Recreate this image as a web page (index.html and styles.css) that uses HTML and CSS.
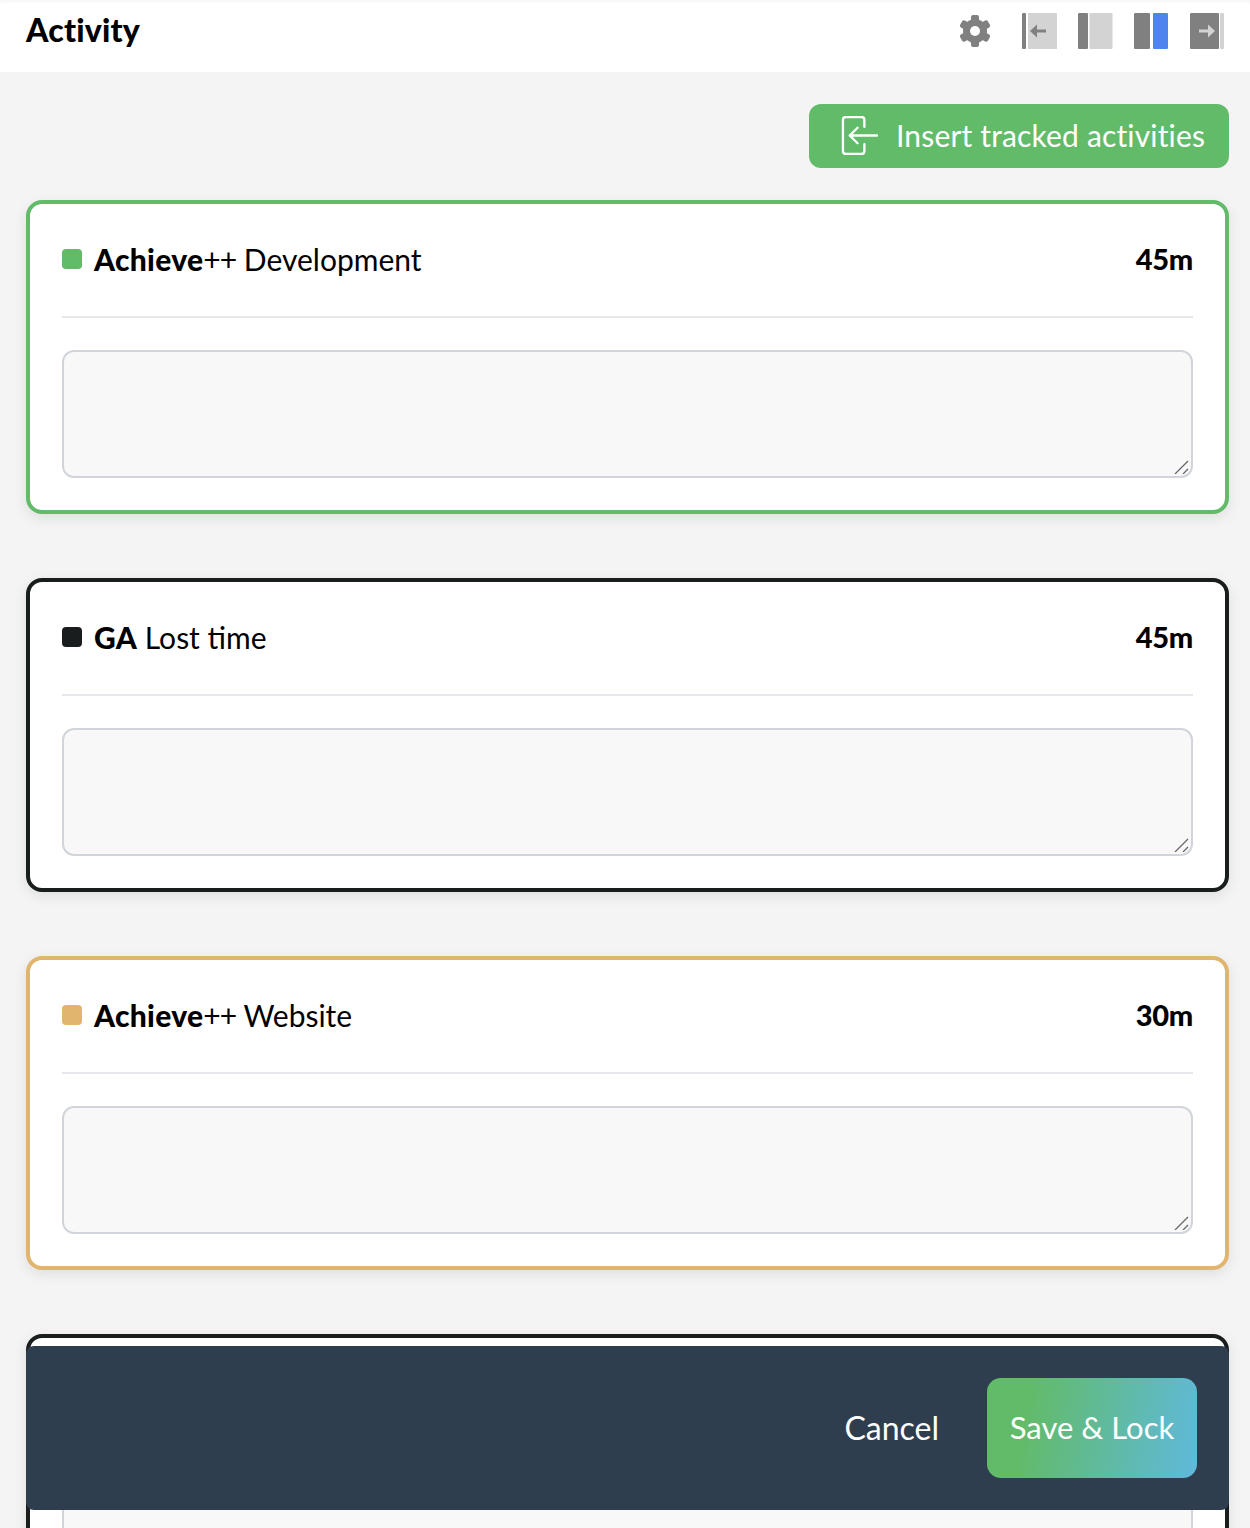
FILE: index.html
```html
<!DOCTYPE html>
<html lang="en">
    <head>
        <meta charset="utf-8">
        <meta name="viewport" content="width=device-width, initial-scale=1">
        <title>Activity</title>
        <link rel="stylesheet" href="styles.css">
    </head>
    <body>
        <svg class="defs">
            <symbol id="grip" viewBox="0 0 15 14">
                <path d="M1 14L14 1M9 14l5-5" fill="none" stroke="#666" stroke-width="1.3"/>
            </symbol>
        </svg>

        <header class="topbar">
            <h1>Activity</h1>
            <div class="tools">
                <svg class="gear" viewBox="0 0 32 32">
                    <g fill="#808080">
                        <rect x="12" y="0" width="8" height="32" rx="2"/>
                        <rect x="12" y="0" width="8" height="32" rx="2" transform="rotate(60 16 16)"/>
                        <rect x="12" y="0" width="8" height="32" rx="2" transform="rotate(120 16 16)"/>
                        <circle cx="16" cy="16" r="12"/>
                    </g>
                    <circle cx="16" cy="16" r="5" fill="#fff"/>
                </svg>
                <div class="panes">
                    <svg viewBox="0 0 36 36">
                        <rect x="0" y="0" width="4" height="36" rx="1" fill="#808080"/>
                        <rect x="6" y="0" width="29" height="36" fill="#d3d3d3"/>
                        <path d="M12 18h12" stroke="#808080" stroke-width="3"/>
                        <path d="M8 18l7-6.500v13z" fill="#808080"/>
                    </svg>
                    <svg viewBox="0 0 36 36">
                        <rect x="0" y="0" width="10" height="36" rx="1" fill="#808080"/>
                        <rect x="11.500" y="0" width="23" height="36" rx="1" fill="#d3d3d3"/>
                    </svg>
                    <svg viewBox="0 0 36 36">
                        <rect x="0" y="0" width="16" height="36" rx="1" fill="#808080"/>
                        <rect x="19" y="0" width="15" height="36" rx="1" fill="#4f84ee"/>
                    </svg>
                    <svg viewBox="0 0 36 36">
                        <rect x="0" y="0" width="29" height="36" rx="1" fill="#808080"/>
                        <rect x="30" y="0" width="4" height="36" rx="1" fill="#d3d3d3"/>
                        <path d="M9 18h12" stroke="#d3d3d3" stroke-width="3"/>
                        <path d="M25 18l-7-6.500v13z" fill="#d3d3d3"/>
                    </svg>
                </div>
            </div>
        </header>

        <main class="content">
            <div class="actions">
                <button class="insert-btn">
                    <svg viewBox="0 0 38 40" fill="none" stroke="#fff" stroke-width="2.400" stroke-linecap="round" stroke-linejoin="round">
                        <path d="M24 11V4a3 3 0 0 0-3-3H5a3 3 0 0 0-3 3v32a3 3 0 0 0 3 3h16a3 3 0 0 0 3-3v-7"/>
                        <path d="M37 20H9M17 12l-8 8 8 8"/>
                    </svg>
                    Insert tracked activities
                </button>
            </div>

            <section class="card green">
                <div class="card-head">
                    <span class="dot"></span>
                    <span class="name"><b>Achieve</b><span class="plus">++</span> Development</span>
                    <b class="time">45m</b>
                </div>
                <div class="note">
                    <textarea></textarea>
                    <svg class="grip"><use href="#grip"></use></svg>
                </div>
            </section>

            <section class="card black">
                <div class="card-head">
                    <span class="dot"></span>
                    <span class="name"><b>GA</b> Lost time</span>
                    <b class="time">45m</b>
                </div>
                <div class="note">
                    <textarea></textarea>
                    <svg class="grip"><use href="#grip"></use></svg>
                </div>
            </section>

            <section class="card tan">
                <div class="card-head">
                    <span class="dot"></span>
                    <span class="name"><b>Achieve</b><span class="plus">++</span> Website</span>
                    <b class="time">30m</b>
                </div>
                <div class="note">
                    <textarea></textarea>
                    <svg class="grip"><use href="#grip"></use></svg>
                </div>
            </section>

            <section class="card black">
                <div class="card-head">
                    <span class="dot"></span>
                    <span class="name"><b>GA</b> Lost time</span>
                    <b class="time">15m</b>
                </div>
                <div class="note">
                    <textarea></textarea>
                    <svg class="grip"><use href="#grip"></use></svg>
                </div>
            </section>
        </main>

        <footer class="savebar">
            <button class="cancel">Cancel</button>
            <button class="save">Save &amp; Lock</button>
        </footer>
    </body>
</html>
```

FILE: styles.css
```css
html, body {height: 100%}
body {
    font-family: Lato, 'Open Sans', sans-serif;
    color: #000;
    background: #f4f4f4;
    margin: 0;
    overflow: hidden;
}
body>.defs {
    display: none;
}
button {
    font: inherit;
    border: 0;
    cursor: pointer;
}
.topbar {
    display: flex;
    align-items: center;
    justify-content: space-between;
    height: 72px;
    padding: 0 24px 10px 26px;
    box-sizing: border-box;
    background: #fff;
    box-shadow: inset 0 4px 4px -3px rgba(0, 0, 0, 0.06);
}
h1 {
    margin: 0 0 4px;
    font-size: 32px;
    font-weight: 900;
    letter-spacing: 0.2px;
}
.tools {
    display: flex;
    align-items: center;
    gap: 31px;
}
.gear {
    width: 32px;
    height: 32px;
}
.panes {
    display: flex;
    gap: 20px;
}
.panes svg {
    width: 36px;
    height: 36px;
}
.content {
    height: calc(100vh - 72px);
    box-sizing: border-box;
    padding: 32px 21px 0 26px;
    overflow: hidden;
}
.actions {
    display: flex;
    justify-content: flex-end;
    margin-bottom: 32px;
}
.insert-btn {
    display: flex;
    align-items: center;
    gap: 18px;
    width: 420px;
    height: 64px;
    padding: 0 0 2px 32px;
    box-sizing: border-box;
    background: #62bb69;
    color: #fff;
    font-size: 30px;
    letter-spacing: 0.16px;
    border-radius: 12px;
    white-space: nowrap;
}
.insert-btn svg {
    width: 37px;
    height: 39px;
    flex: none;
}
.card {
    --accent: #62bb69;
    height: 314px;
    box-sizing: border-box;
    padding: 0 32px;
    margin-bottom: 64px;
    background: #fff;
    border: 4px solid var(--accent);
    border-radius: 16px;
    box-shadow: 0 4px 14px rgba(0, 0, 0, 0.09);
}
.card.black {--accent: #1a1d1e}
.card.tan {--accent: #e1b56e}
.card-head {
    display: flex;
    align-items: center;
    height: 114px;
    box-sizing: border-box;
    padding-bottom: 2px;
    margin-bottom: 32px;
    border-bottom: 2px solid #e5e7eb;
    font-size: 30px;
}
.dot {
    width: 20px;
    height: 20px;
    margin-right: 12px;
    border-radius: 4px;
    background: var(--accent);
}
.name b {
    font-weight: 900;
    letter-spacing: 0.3px;
}
.plus {
    letter-spacing: -1px;
}
.time {
    margin: 0 0 2px auto;
    font-size: 29px;
    font-weight: 900;
    letter-spacing: -0.3px;
}
.note {
    position: relative;
}
textarea {
    display: block;
    width: 100%;
    height: 128px;
    box-sizing: border-box;
    background: #f8f8f8;
    border: 2px solid #d1d5db;
    border-radius: 12px;
    outline: 0;
    resize: none;
}
.grip {
    position: absolute;
    right: 4px;
    bottom: 4px;
    width: 15px;
    height: 14px;
}
.savebar {
    position: fixed;
    left: 26px;
    right: 21px;
    bottom: 18px;
    height: 164px;
    display: flex;
    align-items: center;
    justify-content: flex-end;
    gap: 48px;
    padding-right: 32px;
    background: #2f3e4e;
    border-radius: 8px;
}
.cancel {
    background: none;
    color: #fff;
    font-size: 32px;
    padding: 0 0 2px;
}
.save {
    width: 210px;
    height: 100px;
    padding: 0 0 3px;
    border-radius: 14px;
    color: #fff;
    font-size: 31px;
    background: linear-gradient(100deg, #62bb69 20%, #5fb9dc 100%);
}
```
